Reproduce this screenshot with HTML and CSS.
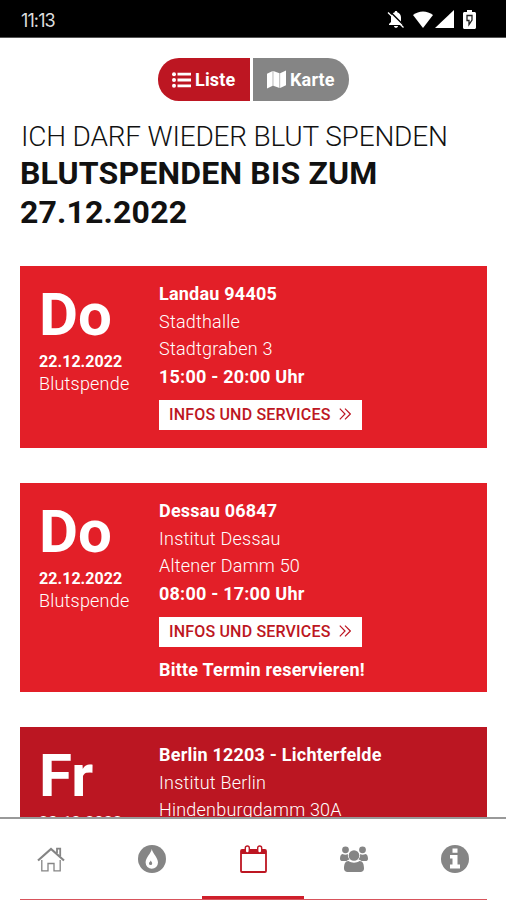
FILE: index.html
```html
<!DOCTYPE html>
<html lang="de">
  <head>
    <meta charset="UTF-8" />
    <meta name="viewport" content="width=device-width, initial-scale=1.0" />
    <title>Blutspende Termine</title>
    <link rel="stylesheet" href="styles.css">
  </head>

  <body>
    <div class="statusbar">
      <span class="clock">11:13</span>
      <div class="status-icons">
        <svg class="bell" width="18" height="18" viewBox="0 0 18 18">
          <path d="M9 1c.8 0 1.300.5 1.300 1.200C12.700 2.900 14 5 14 7.500V12l2 2v1H2v-1l2-2V7.500C4 5 5.300 2.900 7.700 2.200 7.700 1.500 8.200 1 9 1zM7 16h4c0 1-.9 1.800-2 1.800S7 17 7 16z" fill="#fff" />
          <path d="M3 1.500l15 15" stroke="#000" stroke-width="1.500" />
          <path d="M1 2.500l15.500 15" stroke="#fff" stroke-width="1.300" />
        </svg>
        <svg class="wifi" width="20" height="17" viewBox="0 0 20 17">
          <path d="M0 4C6-.8 14-.8 20 4L10 17z" fill="#fff" />
        </svg>
        <svg class="signal" width="19" height="18" viewBox="0 0 19 18">
          <path d="M19 0v18H0z" fill="#fff" />
        </svg>
        <svg class="battery" width="13" height="19" viewBox="0 0 13 19">
          <path d="M4 0h5v2h2.500c.8 0 1.500.7 1.500 1.500v14c0 .8-.7 1.500-1.500 1.500h-10C.7 19 0 18.300 0 17.500v-14C0 2.700.7 2 1.500 2H4z" fill="#fff" />
          <path d="M4 5.500h5v4.500l-3 4.500v-4H4z" fill="none" stroke="#222" stroke-width="1.300" />
        </svg>
      </div>
    </div>

    <main class="content">
      <div class="toggle">
        <button type="button" class="btn-liste">
          <svg width="19" height="16" viewBox="0 0 19 16" fill="#fff">
            <circle cx="2" cy="2.200" r="2" /><circle cx="2" cy="8" r="2" /><circle cx="2" cy="13.800" r="2" />
            <path d="M5.500.8H19v2.800H5.500zM5.500 6.600H19v2.800H5.500zM5.500 12.400H19v2.800H5.500z" />
          </svg>
          <span>Liste</span>
        </button>
        <button type="button" class="btn-karte">
          <svg width="19" height="19" viewBox="0 0 20 19" fill="#fff">
            <path d="M0 3.500L6 .5v15.500L0 19zM6.600 .5l6.600 2.500v15.500L6.600 16zM13.800 3l6.200-3v15.500l-6.200 3z" />
          </svg>
          <span>Karte</span>
        </button>
      </div>

      <h1 class="title">ICH DARF WIEDER BLUT SPENDEN</h1>
      <h2 class="subtitle">BLUTSPENDEN BIS ZUM<br>27.12.2022</h2>

      <div class="card">
        <div class="day">
          <div class="weekday">Do</div>
          <div class="date">22.12.2022</div>
          <div class="type">Blutspende</div>
        </div>
        <div class="info">
          <b>Landau 94405</b>
          <span>Stadthalle</span>
          <span>Stadtgraben 3</span>
          <b>15:00 - 20:00 Uhr</b>
          <button type="button" class="btn-info">
            <span>INFOS UND SERVICES</span>
            <svg width="12" height="12" viewBox="0 0 12 12"><path d="M.8.7L6 6 .8 11.300M6 .7L11.300 6 6 11.300" /></svg>
          </button>
        </div>
      </div>

      <div class="card tall">
        <div class="day">
          <div class="weekday">Do</div>
          <div class="date">22.12.2022</div>
          <div class="type">Blutspende</div>
        </div>
        <div class="info">
          <b>Dessau 06847</b>
          <span>Institut Dessau</span>
          <span>Altener Damm 50</span>
          <b>08:00 - 17:00 Uhr</b>
          <button type="button" class="btn-info">
            <span>INFOS UND SERVICES</span>
            <svg width="12" height="12" viewBox="0 0 12 12"><path d="M.8.7L6 6 .8 11.300M6 .7L11.300 6 6 11.300" /></svg>
          </button>
          <b class="note">Bitte Termin reservieren!</b>
        </div>
      </div>

      <div class="card dark">
        <div class="day">
          <div class="weekday">Fr</div>
          <div class="date">23.12.2022</div>
        </div>
        <div class="info">
          <b>Berlin 12203 - Lichterfelde</b>
          <span>Institut Berlin</span>
          <span>Hindenburgdamm 30A</span>
        </div>
      </div>
    </main>

    <nav class="tabs">
      <a class="tab">
        <svg width="28" height="25" viewBox="0 0 28 25" fill="none" stroke="#858585" stroke-width="1.300">
          <path d="M4.800 13v10.800h6.200v-7.300h6v7.300h6.200V13" />
          <path d="M1 13.500L14 2l13 11.500" stroke-width="2.200" />
          <path d="M20 6V1.700h3.200V9" stroke-width="1.800" />
        </svg>
      </a>
      <a class="tab">
        <svg width="28" height="28" viewBox="0 0 28 28">
          <circle cx="14" cy="14" r="14" fill="#858585" />
          <path d="M13.800 4c.8 4.500 6.200 8.500 6.200 13.500a6.200 6.200 0 0 1-12.400 0C7.600 12.500 13 8.500 13.800 4z" fill="#fff" />
          <path d="M12.800 15.500c.4 1.200 1.400 1.700 1.400 2.900a1.600 1.600 0 0 1-3.200 0c0-1.200 1.400-1.700 1.800-2.900z" fill="#858585" />
        </svg>
      </a>
      <a class="tab active">
        <svg width="27" height="28" viewBox="0 0 27 28">
          <rect x="1" y="5" width="25" height="22" rx="1" fill="#fff" stroke="#bd1622" stroke-width="1.800" />
          <path d="M1 5h25v4H1z" fill="#bd1622" />
          <rect x="5.300" y="1" width="4" height="7" rx="2" fill="#fff" stroke="#bd1622" stroke-width="1.400" />
          <rect x="17.700" y="1" width="4" height="7" rx="2" fill="#fff" stroke="#bd1622" stroke-width="1.400" />
        </svg>
      </a>
      <a class="tab">
        <svg width="28" height="26" viewBox="0 0 28 26" fill="#858585">
          <circle cx="5.500" cy="3.800" r="3.400" />
          <circle cx="22.500" cy="3.800" r="3.400" />
          <circle cx="14" cy="9.500" r="5.300" />
          <path d="M2.500 8c1.800 1 4.200 1 5.300 0 .1 2.500.5 4 1.700 5.500-1 0-2 .5-3 1.500H2.500C1 15 0 14.200 0 12.700 0 10.500.8 8 2.500 8zM25.500 8c-1.800 1-4.200 1-5.300 0-.1 2.500-.5 4-1.700 5.500 1 0 2 .5 3 1.500h4c1.500 0 2.500-.8 2.500-2.300 0-2.200-.8-4.700-2.500-4.700z" />
          <path d="M8.500 15c3 2.200 8 2.200 11 0 3.500 0 4.500 3.500 4.500 7.500 0 2-1.500 3.500-3.500 3.500h-13C5.500 26 4 24.500 4 22.500 4 18.500 5 15 8.500 15z" />
        </svg>
      </a>
      <a class="tab">
        <svg width="28" height="28" viewBox="0 0 28 28">
          <circle cx="14" cy="14" r="14" fill="#858585" />
          <path d="M11.500 3.500h5v4.300h-5zM9 10h7.500v9.500H19v4H9v-4h2.500v-6H9z" fill="#fff" />
        </svg>
      </a>
      <div class="next-edge"></div>
    </nav>
  </body>
</html>
```

FILE: styles.css
```css
body {
  margin: 0;
  width: 506px;
  height: 900px;
  display: flex;
  flex-direction: column;
  overflow: hidden;
  background: #fff;
  font-family: Roboto, sans-serif;
}

button {
  border: 0;
  margin: 0;
  font-family: inherit;
}

svg {
  display: block;
  flex-shrink: 0;
}

.statusbar {
  height: 38px;
  flex-shrink: 0;
  box-sizing: border-box;
  padding: 1px 30px 0 21px;
  display: flex;
  justify-content: space-between;
  align-items: center;
  background: #000;
  border-bottom: 1px solid #555;
}

.clock {
  padding-top: 2px;
  color: #ddd;
  font-family: Inter, sans-serif;
  font-size: 18px;
  letter-spacing: -0.9px;
}

.status-icons {
  display: flex;
  align-items: center;
}

.wifi {
  margin-left: 8px;
}

.signal {
  margin-left: 2px;
}

.battery {
  margin-left: 9px;
}

.content {
  flex: 1;
  min-height: 0;
  overflow: hidden;
  padding: 20px 19px 0 20px;
}

.toggle {
  display: flex;
  justify-content: center;
  gap: 3px;
}

.toggle button {
  height: 43px;
  padding: 0 14px;
  display: flex;
  align-items: center;
  gap: 4px;
  color: #fff;
  font-size: 18px;
  font-weight: 700;
  letter-spacing: 0.15px;
}

.toggle .btn-liste {
  width: 92px;
  background: #bd1622;
  border-radius: 21px 0 0 21px;
}

.toggle .btn-karte {
  width: 96px;
  background: #858585;
  border-radius: 0 21px 21px 0;
}

.title {
  margin: 18px 0 0 1px;
  font-size: 28px;
  line-height: 36px;
  font-weight: 300;
  letter-spacing: -0.19px;
  color: #111;
  white-space: nowrap;
}

.subtitle {
  margin: -1px 0 34px;
  font-size: 32px;
  line-height: 39px;
  font-weight: 700;
  letter-spacing: 0.18px;
  color: #111;
  white-space: nowrap;
}

.card {
  display: flex;
  box-sizing: border-box;
  height: 182px;
  padding: 14px 19px 0;
  margin-bottom: 35px;
  background: #e31f28;
  color: #fff;
}

.card.tall {
  height: 209px;
}

.card.dark {
  background: #bb1622;
}

.day {
  width: 120px;
}

.weekday {
  font-size: 60px;
  line-height: 70px;
  font-weight: 700;
}

.date {
  font-size: 16px;
  line-height: 23px;
  font-weight: 700;
  letter-spacing: 0.05px;
}

.type {
  font-size: 18px;
  line-height: 22px;
  font-weight: 300;
  letter-spacing: 0.2px;
}

.info {
  display: flex;
  flex-direction: column;
  align-items: flex-start;
  font-size: 18px;
  line-height: 27.6px;
  font-weight: 300;
  letter-spacing: 0.22px;
  white-space: nowrap;
}

.info b {
  font-weight: 700;
}

.btn-info {
  width: 203px;
  height: 30px;
  margin-top: 10px;
  padding: 0 11px 2px 10px;
  display: flex;
  align-items: center;
  justify-content: space-between;
  background: #fff;
  color: #bd1622;
  font-size: 16px;
  font-weight: 500;
  letter-spacing: 0.18px;
}

.btn-info svg {
  fill: none;
  stroke: #bd1622;
  stroke-width: 1.2;
}

.info .note {
  margin-top: 9px;
}

.tabs {
  height: 83px;
  flex-shrink: 0;
  box-sizing: border-box;
  border-top: 2px solid #999;
  display: flex;
  position: relative;
  background: #fff;
}

.tab {
  flex: 1;
  display: flex;
  align-items: center;
  justify-content: center;
  box-sizing: border-box;
  padding-top: 3px;
  border-bottom: 4px solid transparent;
}

.tab.active {
  border-bottom-color: #cf1f2b;
}

/* top edge of the following card, visible under the bar */
.next-edge {
  position: absolute;
  left: 20px;
  right: 19px;
  bottom: 0;
  height: 1px;
  background: #d8545c;
}
```
